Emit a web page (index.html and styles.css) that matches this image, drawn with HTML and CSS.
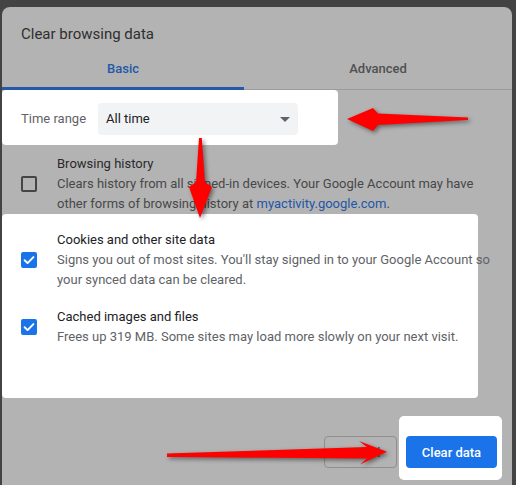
FILE: index.html
```html
<!DOCTYPE html>
<html lang="en">
<head>
<meta charset="utf-8">
<title>Clear browsing data</title>
<link rel="stylesheet" href="styles.css">
</head>
<body>
<div class="dialog">
  <h1 class="title">Clear browsing data</h1>
  <div class="tabs">
    <div class="tab active">Basic</div>
    <div class="tab">Advanced</div>
  </div>
  <div class="hl range-box">
    <span class="range-label">Time range</span>
    <div class="select"><span>All time</span><span class="caret"></span></div>
  </div>
  <div class="row dim first">
    <span class="cb"></span>
    <div class="text">
      <div class="row-title">Browsing history</div>
      <div class="row-desc">Clears history from all signed-in devices. Your Google Account may have other forms of browsing history at <span class="link">myactivity.google.com</span>.</div>
    </div>
  </div>
  <div class="hl checks-box">
    <div class="row">
      <span class="cb checked"><svg viewBox="0 0 16 16" width="16" height="16"><path d="M3.6 8.2 L6.6 11.1 L12.4 5.1" fill="none" stroke="#fff" stroke-width="1.9" stroke-linecap="round" stroke-linejoin="round"/></svg></span>
      <div class="text">
        <div class="row-title">Cookies and other site data</div>
        <div class="row-desc">Signs you out of most sites. You'll stay signed in to your Google Account so your synced data can be cleared.</div>
      </div>
    </div>
    <div class="row second">
      <span class="cb checked"><svg viewBox="0 0 16 16" width="16" height="16"><path d="M3.6 8.2 L6.6 11.1 L12.4 5.1" fill="none" stroke="#fff" stroke-width="1.9" stroke-linecap="round" stroke-linejoin="round"/></svg></span>
      <div class="text">
        <div class="row-title">Cached images and files</div>
        <div class="row-desc">Frees up 319 MB. Some sites may load more slowly on your next visit.</div>
      </div>
    </div>
  </div>
  <div class="footer">
    <button class="btn-cancel">Cancel</button>
    <div class="hl btn-box"><button class="btn-primary">Clear data</button></div>
  </div>
</div>
<svg class="arrows" width="516" height="485" viewBox="0 0 516 485">
  <polygon points="347,119 373,108 378,113.5 468,117.5 468,120 378,125 373,131"/>
  <polygon points="199,138 201.8,138 205,182 212,187 200,218 189,187 196,182"/>
  <polygon points="167,453.5 367,447 359,441 387,451.7 360,464.5 367,458.5 167,457"/>
</svg>
</body>
</html>
```

FILE: styles.css
```css
* { box-sizing: border-box; }
html, body { margin: 0; padding: 0; }
body {
  background: #434343;
  width: 516px;
  height: 485px;
  overflow: hidden;
  font-family: Roboto, "Liberation Sans", Arial, sans-serif;
  font-size: 13px;
  line-height: 20px;
  position: relative;
}
.dialog {
  margin: 7px 0 0 2px;
  width: 510px;
  height: 478px;
  background: #b3b3b3;
  border-radius: 8px 8px 0 0;
  overflow: hidden;
}
.title {
  margin: 0;
  padding: 17px 0 0 19px;
  font-size: 15px;
  font-weight: 400;
  line-height: 20px;
  color: #2f2f2f;
}
.tabs {
  display: grid;
  grid-template-columns: 242px 1fr;
  border-bottom: 1px solid #9c9c9c;
}
.tab {
  height: 45px;
  padding-top: 15px;
  text-align: center;
  font-weight: 500;
  color: #4f5052;
}
.tab.active {
  color: #2458a8;
  height: 46px;
  margin-bottom: -1px;
  border-bottom: 3px solid #2458a8;
}
.hl {
  background: #fff;
  border-radius: 4px;
}
.range-box {
  width: 336px;
  height: 55px;
  padding: 13px 0 0 19px;
  display: flex;
  align-items: flex-start;
}
.range-label {
  width: 77px;
  line-height: 32px;
  color: #5f6368;
}
.select {
  width: 200px;
  height: 32px;
  background: #f1f3f4;
  border-radius: 4px;
  display: flex;
  align-items: center;
  justify-content: space-between;
  padding: 0 8px;
  color: #202124;
}
.caret {
  width: 0;
  height: 0;
  border-left: 5px solid transparent;
  border-right: 5px solid transparent;
  border-top: 5px solid #5f6368;
}
.row {
  display: flex;
  align-items: center;
  gap: 20px;
  padding-left: 19px;
  width: 491px;
}
.row.first { margin-top: 9px; }
.text { width: 436px; }
.row-title { color: #202124; }
.row-desc { color: #5f6368; }
.dim .row-title { color: #2a2a2a; }
.dim .row-desc { color: #484848; }
.link { color: #2456a8; }
.cb {
  flex: none;
  width: 16px;
  height: 16px;
  border: 2px solid #444546;
  border-radius: 2px;
  display: block;
}
.cb.checked {
  border: none;
  background: #1a73e8;
}
.cb svg { display: block; }
.checks-box {
  width: 476px;
  padding: 16px 0 51px 0;
}
.row.second { margin-top: 17px; }
.footer {
  display: flex;
  justify-content: flex-end;
  align-items: flex-start;
  margin-top: 18px;
  padding-right: 10px;
}
.btn-cancel {
  margin: 20px 2px 0 0;
  width: 73px;
  height: 32px;
  border: 1px solid #8f8f8f;
  border-radius: 4px;
  background: transparent;
  color: #2458a8;
  font-family: inherit;
  font-size: 13px;
  font-weight: 500;
  padding: 0;
}
.btn-box {
  padding: 20px 5px 12px 7px;
  border-radius: 5px;
}
.btn-primary {
  display: block;
  width: 91px;
  height: 32px;
  border: none;
  border-radius: 4px;
  background: #1a73e8;
  color: #fff;
  font-family: inherit;
  font-size: 13px;
  font-weight: 500;
  padding: 0;
}
.arrows {
  position: absolute;
  left: 0;
  top: 0;
  pointer-events: none;
  fill: #ff0000;
  filter: drop-shadow(2px 2px 2px rgba(0,0,0,0.45));
}
```
